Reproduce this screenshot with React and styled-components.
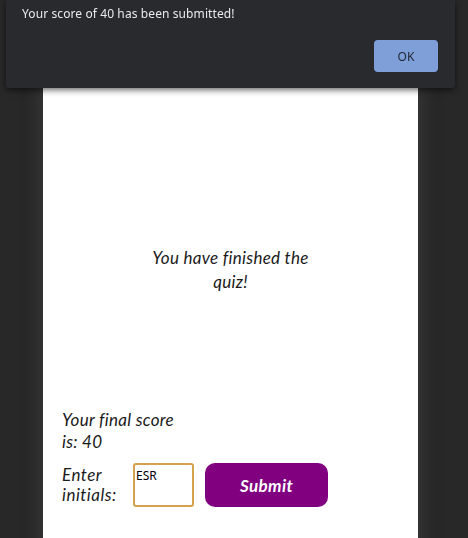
import React from "react";
import styled, { createGlobalStyle } from "styled-components";

const Global = createGlobalStyle`
  html, body { margin: 0; padding: 0; background: #282828; height: 100%; overflow: hidden; }
  body { font-family: "Lato", "Noto Sans", sans-serif; }
`;

const Page = styled.div`
  display: flex;
  padding-left: 43px;
`;

const Card = styled.main`
  width: 375px;
  height: 560px;
  background: #ffffff;
  box-shadow: 0 0 14px 3px #3a3a3a;
  display: flex;
  flex-direction: column;
  font-family: "Lato", "Noto Sans", sans-serif;
  font-style: italic;
  color: #1a1a1a;
`;

const Heading = styled.h2`
  margin: 246px auto 0;
  width: 170px;
  text-align: center;
  font-size: 17px;
  font-weight: 400;
  line-height: 24px;
  letter-spacing: 0.3px;
`;

const Score = styled.p`
  margin: 115px 0 0 19px;
  width: 125px;
  font-size: 17px;
  line-height: 22px;
  letter-spacing: 0.3px;
`;

const Row = styled.div`
  display: flex;
  align-items: flex-start;
  margin: 10px 0 0 19px;
`;

const Label = styled.label`
  width: 60px;
  font-size: 17px;
  line-height: 20px;
  letter-spacing: 0.5px;
  margin-top: 2px;
`;

const Input = styled.input`
  box-sizing: border-box;
  width: 61px;
  height: 44px;
  margin-left: 11px;
  border: 2px solid #d4a24c;
  border-radius: 3px;
  padding: 0 0 20px 1px;
  font-family: "Noto Sans", sans-serif;
  font-style: normal;
  font-size: 12px;
  color: #000;
  outline: none;
`;

const SubmitButton = styled.button`
  width: 123px;
  height: 44px;
  margin-left: 11px;
  border: none;
  border-radius: 10px;
  background: #800080;
  color: #ffffff;
  font-family: "Lato", "Noto Sans", sans-serif;
  font-style: italic;
  font-weight: 700;
  font-size: 17px;
  letter-spacing: 0.4px;
`;

const Dialog = styled.div`
  position: fixed;
  top: 0;
  left: 6px;
  width: 449px;
  height: 88px;
  box-sizing: border-box;
  background: #292a2d;
  box-shadow: 0 2px 6px rgba(0, 0, 0, 0.6);
  border-radius: 0 0 3px 3px;
  padding: 6px 17px 0 16px;
  display: flex;
  flex-direction: column;
  font-family: "Noto Sans", "Open Sans", sans-serif;
`;

const Message = styled.div`
  color: #e8eaed;
  font-size: 12px;
  line-height: 16px;
  letter-spacing: 0.1px;
`;

const Actions = styled.div`
  display: flex;
  justify-content: flex-end;
  margin-top: 18px;
`;

const OkButton = styled.button`
  width: 64px;
  height: 32px;
  border: none;
  border-radius: 4px;
  background: #7f9fd9;
  color: #1f2533;
  font-family: "Noto Sans", sans-serif;
  font-size: 12px;
`;

export default function App() {
  return (
    <>
      <Global />
      <Page>
        <Card>
          <Heading>You have finished the quiz!</Heading>
          <Score>Your final score is: 40</Score>
          <Row>
            <Label htmlFor="initials">Enter initials:</Label>
            <Input id="initials" defaultValue="ESR" />
            <SubmitButton>Submit</SubmitButton>
          </Row>
        </Card>
      </Page>
      <Dialog role="alertdialog">
        <Message>Your score of 40 has been submitted!</Message>
        <Actions>
          <OkButton>OK</OkButton>
        </Actions>
      </Dialog>
    </>
  );
}
